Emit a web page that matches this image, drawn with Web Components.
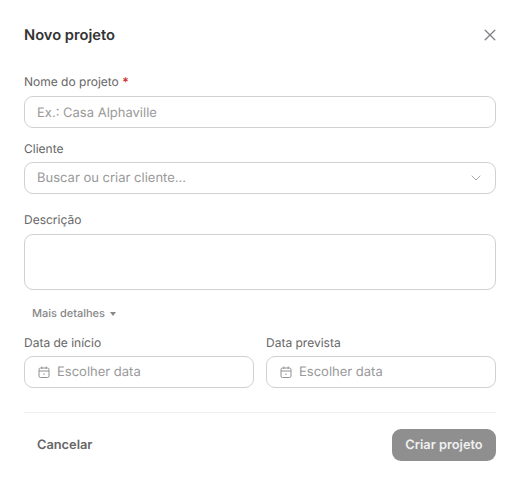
<!DOCTYPE html>
<html lang="pt-BR">
<head>
<meta charset="utf-8">
<title>Novo projeto</title>
<style>
  html, body { margin: 0; background: #fff; }
  body { font-family: Inter, "Liberation Sans", sans-serif; text-rendering: geometricPrecision; }
</style>
</head>
<body>
<project-dialog>
  <span slot="title">Novo projeto</span>

  <form-field style="margin-top:29px;--label-gap:6px">
    <span slot="label">Nome do projeto</span>
    <span slot="mark">*</span>
    <text-box placeholder="Ex.: Casa Alphaville" style="padding-top:1px"></text-box>
  </form-field>

  <form-field style="margin-top:13px;--label-gap:5px">
    <span slot="label">Cliente</span>
    <text-box placeholder="Buscar ou criar cliente..." trailing="chevron"></text-box>
  </form-field>

  <form-field style="margin-top:18px;--label-gap:6px">
    <span slot="label">Descrição</span>
    <text-box multiline></text-box>
  </form-field>

  <more-toggle>Mais detalhes</more-toggle>

  <date-row>
    <form-field style="--label-gap:5px">
      <span slot="label">Data de início</span>
      <text-box placeholder="Escolher data" leading="calendar"></text-box>
    </form-field>
    <form-field style="--label-gap:5px">
      <span slot="label">Data prevista</span>
      <text-box placeholder="Escolher data" leading="calendar"></text-box>
    </form-field>
  </date-row>

  <dialog-footer>
    <ghost-button slot="start">Cancelar</ghost-button>
    <submit-button slot="end">Criar projeto</submit-button>
  </dialog-footer>
</project-dialog>

<script>
const icons = {
  close: `<svg width="12" height="12" viewBox="0 0 12 12" fill="none" stroke="#808084" stroke-width="1.3" stroke-linecap="round"><path d="M1.2 1.2l9.6 9.6M10.8 1.2l-9.6 9.6"/></svg>`,
  chevron: `<svg width="10" height="6" viewBox="0 0 10 6" fill="none" stroke="#a8a8a8" stroke-width="1" stroke-linecap="round" stroke-linejoin="round"><path d="M1 1l4 4 4-4"/></svg>`,
  calendar: `<svg width="12" height="12" viewBox="0 0 12 12" fill="none" stroke="#919191" stroke-width="1"><rect x="1" y="2" width="10" height="9.5" rx="1.5"/><path d="M1 5h10M3.8 .5v2.5M8.2 .5v2.5M6 7.5v1.5"/></svg>`
};

class ProjectDialog extends HTMLElement {
  constructor() {
    super();
    this.attachShadow({ mode: 'open' }).innerHTML = `
      <style>
        :host { display: block; width: 520px; height: 485px; box-sizing: border-box; padding: 24px 24px 0; background: #fff; }
        header { display: flex; align-items: center; justify-content: space-between; height: 21px; }
        h2 { margin: 2px 0 0; font: 600 14.7px/21px Inter, sans-serif; color: #333; }
        button { all: unset; display: flex; }
      </style>
      <header>
        <h2><slot name="title"></slot></h2>
        <button aria-label="Fechar">${icons.close}</button>
      </header>
      <slot></slot>`;
  }
}

class FormField extends HTMLElement {
  constructor() {
    super();
    this.attachShadow({ mode: 'open' }).innerHTML = `
      <style>
        :host { display: block; min-width: 0; }
        label { display: block; font: 400 12px/16px Inter, sans-serif; color: #666; margin-bottom: var(--label-gap, 6px); }
        .mark { color: #d0342c; font-weight: 600; }
      </style>
      <label><slot name="label"></slot> <span class="mark"><slot name="mark"></slot></span></label>
      <slot></slot>`;
  }
}

class TextBox extends HTMLElement {
  constructor() {
    super();
    const root = this.attachShadow({ mode: 'open' });
    const leading = icons[this.getAttribute('leading')] || '';
    const trailing = icons[this.getAttribute('trailing')] || '';
    root.innerHTML = `
      <style>
        :host { display: flex; align-items: center; box-sizing: border-box; height: 32px; padding: 0 12px; gap: 7px;
          border: 1px solid #d0d0d0; border-radius: 9px; background: #fff;
          font: 400 13px/18px Inter, sans-serif; color: #999; }
        :host([multiline]) { height: 56px; }
        :host([leading]) { padding-left: 13px; }
        span { flex: 1; white-space: nowrap; }
        svg { flex: none; display: block; }
        :host([trailing]) svg { margin-right: 2px; }
      </style>
      ${leading}<span>${this.getAttribute('placeholder') || ''}</span>${trailing}`;
  }
}

class MoreToggle extends HTMLElement {
  constructor() {
    super();
    this.attachShadow({ mode: 'open' }).innerHTML = `
      <style>
        :host { display: flex; align-items: center; gap: 5px; margin: 16px 0 0 8px; height: 15px;
          font: 500 11px/15px Inter, sans-serif; color: #888; }
        i { width: 0; height: 0; border: 3px solid transparent; border-top: 4px solid #888; border-bottom: 0; }
      </style>
      <slot></slot><i></i>`;
  }
}

class DateRow extends HTMLElement {
  constructor() {
    super();
    this.attachShadow({ mode: 'open' }).innerHTML = `
      <style>
        :host { display: grid; grid-template-columns: 1fr 1fr; gap: 12px; margin-top: 14px; }
      </style>
      <slot></slot>`;
  }
}

class DialogFooter extends HTMLElement {
  constructor() {
    super();
    this.attachShadow({ mode: 'open' }).innerHTML = `
      <style>
        :host { display: flex; align-items: center; justify-content: space-between; margin-top: 24px; padding-top: 16px; border-top: 1px solid #eeeeee; }
      </style>
      <slot name="start"></slot><slot name="end"></slot>`;
  }
}

class GhostButton extends HTMLElement {
  constructor() {
    super();
    this.attachShadow({ mode: 'open' }).innerHTML = `
      <style>
        :host { display: inline-flex; align-items: center; height: 32px; box-sizing: border-box; padding: 1px 13px 0;
          font: 600 12.8px/16px Inter, sans-serif; color: #666; }
      </style>
      <slot></slot>`;
  }
}

class SubmitButton extends HTMLElement {
  constructor() {
    super();
    this.attachShadow({ mode: 'open' }).innerHTML = `
      <style>
        :host { display: inline-flex; align-items: center; justify-content: center; box-sizing: border-box; width: 104px; height: 32px; padding-top: 1px;
          border-radius: 9px; background: #8f8f8f; font: 600 12.8px/16px Inter, sans-serif; color: #f0f0f0; }
      </style>
      <slot></slot>`;
  }
}

customElements.define('project-dialog', ProjectDialog);
customElements.define('form-field', FormField);
customElements.define('text-box', TextBox);
customElements.define('more-toggle', MoreToggle);
customElements.define('date-row', DateRow);
customElements.define('dialog-footer', DialogFooter);
customElements.define('ghost-button', GhostButton);
customElements.define('submit-button', SubmitButton);
</script>
</body>
</html>
